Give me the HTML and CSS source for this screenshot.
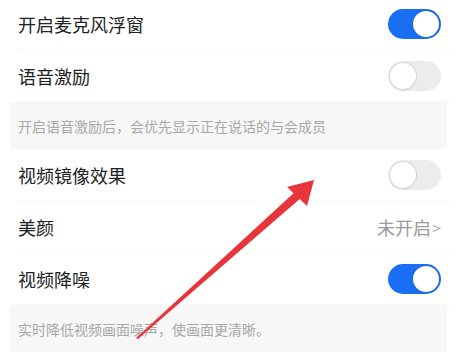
FILE: index.html
```html
<!DOCTYPE html>
<html lang="zh">
<head>
<meta charset="utf-8">
<link rel="stylesheet" href="styles.css">
</head>
<body>
<div class="page">
  <div class="row first">
    <span class="label">开启麦克风浮窗</span>
    <span class="toggle on"><span class="knob"></span></span>
  </div>
  <div class="row">
    <span class="label">语音激励</span>
    <span class="toggle"><span class="knob"></span></span>
  </div>
  <div class="note">开启语音激励后，会优先显示正在说话的与会成员</div>
  <div class="row">
    <span class="label">视频镜像效果</span>
    <span class="toggle"><span class="knob"></span></span>
  </div>
  <div class="row">
    <span class="label">美颜</span>
    <span class="value">未开启<span class="chev">&gt;</span></span>
  </div>
  <div class="row">
    <span class="label">视频降噪</span>
    <span class="toggle on"><span class="knob"></span></span>
  </div>
  <div class="note">实时降低视频画面噪声，使画面更清晰。</div>
  <svg class="arrow" width="469" height="356" viewBox="0 0 469 356">
    <polygon points="136,338 138,339 302,197 296,191" fill="#e8343b"/>
    <polygon points="314,180 287,187 307,206" fill="#e8343b"/>
  </svg>
</div>
</body>
</html>
```
FILE: styles.css
```css
html, body {
  margin: 0;
  padding: 0;
  background: #ffffff;
}
.page {
  position: relative;
  width: 469px;
  height: 356px;
  overflow: hidden;
  font-family: "Noto Sans CJK SC", "Noto Sans", sans-serif;
  color: #222222;
}
.row {
  height: 52px;
  display: flex;
  align-items: center;
  justify-content: space-between;
  padding: 0 28px 0 18px;
  box-sizing: border-box;
  position: relative;
}
.row.first {
  margin-top: -2px;
}
.row::after {
  content: "";
  position: absolute;
  left: 18px;
  right: 18px;
  bottom: 0;
  height: 1px;
  background: #f8f8f8;
}
.label {
  font-size: 18px;
  line-height: 20px;
}
.toggle {
  width: 53px;
  height: 30px;
  border-radius: 15px;
  background: #ececec;
  display: flex;
  align-items: center;
  padding: 2px;
  box-sizing: border-box;
}
.toggle .knob {
  width: 26px;
  height: 26px;
  border-radius: 50%;
  background: #ffffff;
  box-shadow: 0 0 0 1px #d6d6d6, 0 1px 2px rgba(0,0,0,0.12);
}
.toggle.on {
  background: #1a6ef4;
  justify-content: flex-end;
}
.toggle.on .knob {
  box-shadow: 0 0 0 1px #1f63d8;
}
.value {
  font-size: 18px;
  color: #9a9a9a;
  display: flex;
  align-items: center;
}
.chev {
  font-size: 16px;
  margin-left: 1px;
  color: #b5b5b5;
}
.note {
  height: 47px;
  margin: 0 22px 0 10px;
  background: #f7f7f7;
  display: flex;
  align-items: center;
  padding-left: 8px;
  font-size: 14px;
  color: #a8a8a8;
}
.arrow {
  position: absolute;
  left: 0;
  top: 0;
  pointer-events: none;
}
```
